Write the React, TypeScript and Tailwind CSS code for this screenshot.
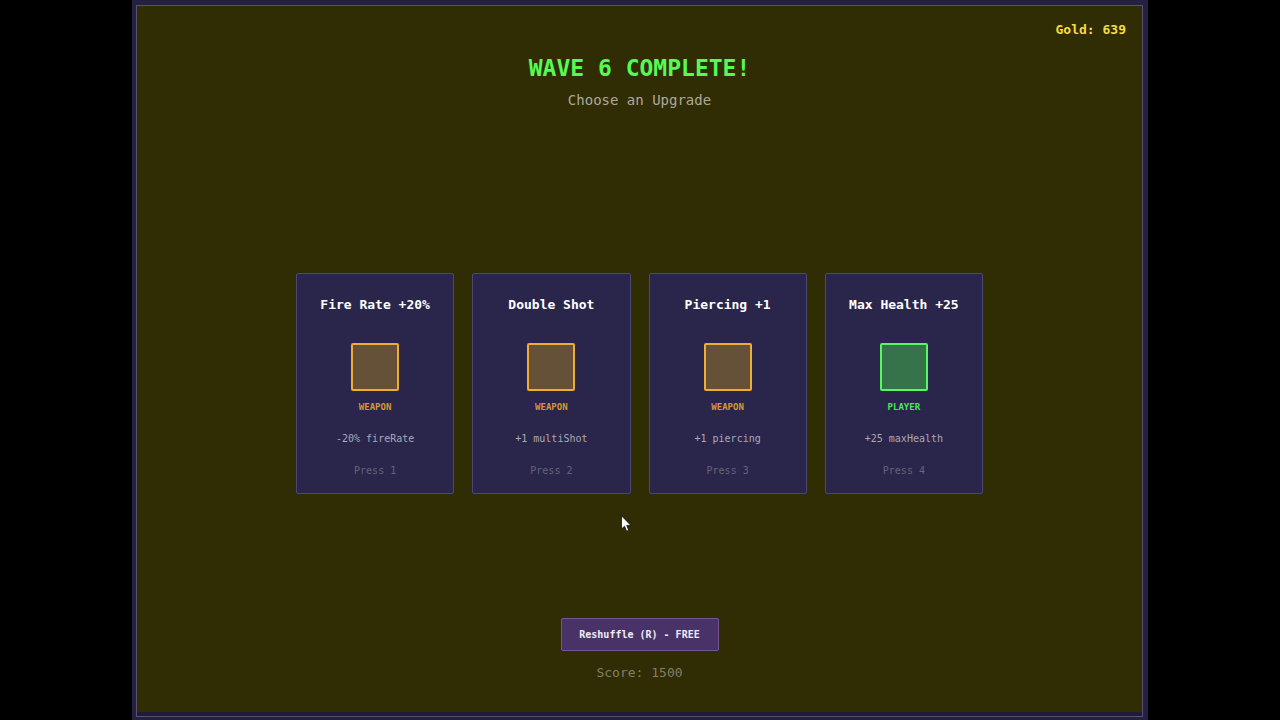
import clsx from 'clsx'

type Category = 'WEAPON' | 'PLAYER'

interface Upgrade {
  name: string
  category: Category
  effect: string
}

const UPGRADES: Upgrade[] = [
  { name: 'Fire Rate +20%', category: 'WEAPON', effect: '-20% fireRate' },
  { name: 'Double Shot', category: 'WEAPON', effect: '+1 multiShot' },
  { name: 'Piercing +1', category: 'WEAPON', effect: '+1 piercing' },
  { name: 'Max Health +25', category: 'PLAYER', effect: '+25 maxHealth' },
]

const SWATCH: Record<Category, string> = {
  WEAPON: 'border-[#f0ae30] bg-[#655038]',
  PLAYER: 'border-[#55f860] bg-[#36734a]',
}

const LABEL: Record<Category, string> = {
  WEAPON: 'text-[#d09a34]',
  PLAYER: 'text-[#4ee45c]',
}

function UpgradeCard({ upgrade, hotkey }: { upgrade: Upgrade; hotkey: number }) {
  return (
    <button
      type="button"
      className="flex flex-col items-center rounded-xs border border-[#4c4876] bg-[#2a264b] pt-[21px] pb-3 leading-5"
    >
      <span className="text-[13px] font-bold whitespace-nowrap text-white">{upgrade.name}</span>
      <span className={clsx('mt-7 size-12 rounded-xs border-2', SWATCH[upgrade.category])} />
      <span className={clsx('mt-1.5 text-[9px] font-bold', LABEL[upgrade.category])}>
        {upgrade.category}
      </span>
      <span className="mt-3 text-[10px] text-[#aaa8b6]">{upgrade.effect}</span>
      <span className="mt-3 text-[10px] text-[#666378]">Press {hotkey}</span>
    </button>
  )
}

function Cursor() {
  return (
    <svg
      className="pointer-events-none absolute top-[515px] left-1/2 -ml-[19px]"
      width="11"
      height="18"
      viewBox="0 0 11 18"
      aria-hidden="true"
    >
      <path
        d="M0.5 0.8V14l3-2.8 2.1 5 2.2-.9-2.1-4.9h4.2z"
        fill="#fff"
        stroke="#111"
        strokeWidth="0.8"
      />
    </svg>
  )
}

export default function App() {
  return (
    <div className="flex min-h-screen justify-center bg-black font-['DejaVu_Sans_Mono',monospace]">
      <div className="relative flex w-full max-w-[1016px] flex-col bg-[#232040] pt-[5px] pr-[5px] pb-[3px] pl-1">
        <div className="flex grow flex-col border border-[#555270] bg-[#1f1c38] pb-1">
          <main className="flex grow flex-col items-center bg-[#302c04] px-4 pt-3.5 pb-[29px]">
            <p className="self-end text-[13px] leading-5 font-bold text-[#f5dc40]">Gold: 639</p>

            <h1 className="mt-3 text-[23px] leading-8 font-bold text-[#55fa55]">
              WAVE 6 COMPLETE!
            </h1>
            <p className="mt-1 text-[14px] leading-6 text-[#aca99c]">Choose an Upgrade</p>

            <div className="my-auto grid w-full max-w-[687px] grid-cols-4 gap-[18px] pt-9">
              {UPGRADES.map((upgrade, i) => (
                <UpgradeCard key={upgrade.name} upgrade={upgrade} hotkey={i + 1} />
              ))}
            </div>

            <button
              type="button"
              className="h-[33px] w-[158px] rounded-xs border border-[#73578d] bg-[#493268] text-[10px] font-bold text-[#f0ebf5]"
            >
              Reshuffle (R) - FREE
            </button>
            <p className="mt-3 text-[13px] leading-5 text-[#838066]">Score: 1500</p>
          </main>
        </div>
        <Cursor />
      </div>
    </div>
  )
}
